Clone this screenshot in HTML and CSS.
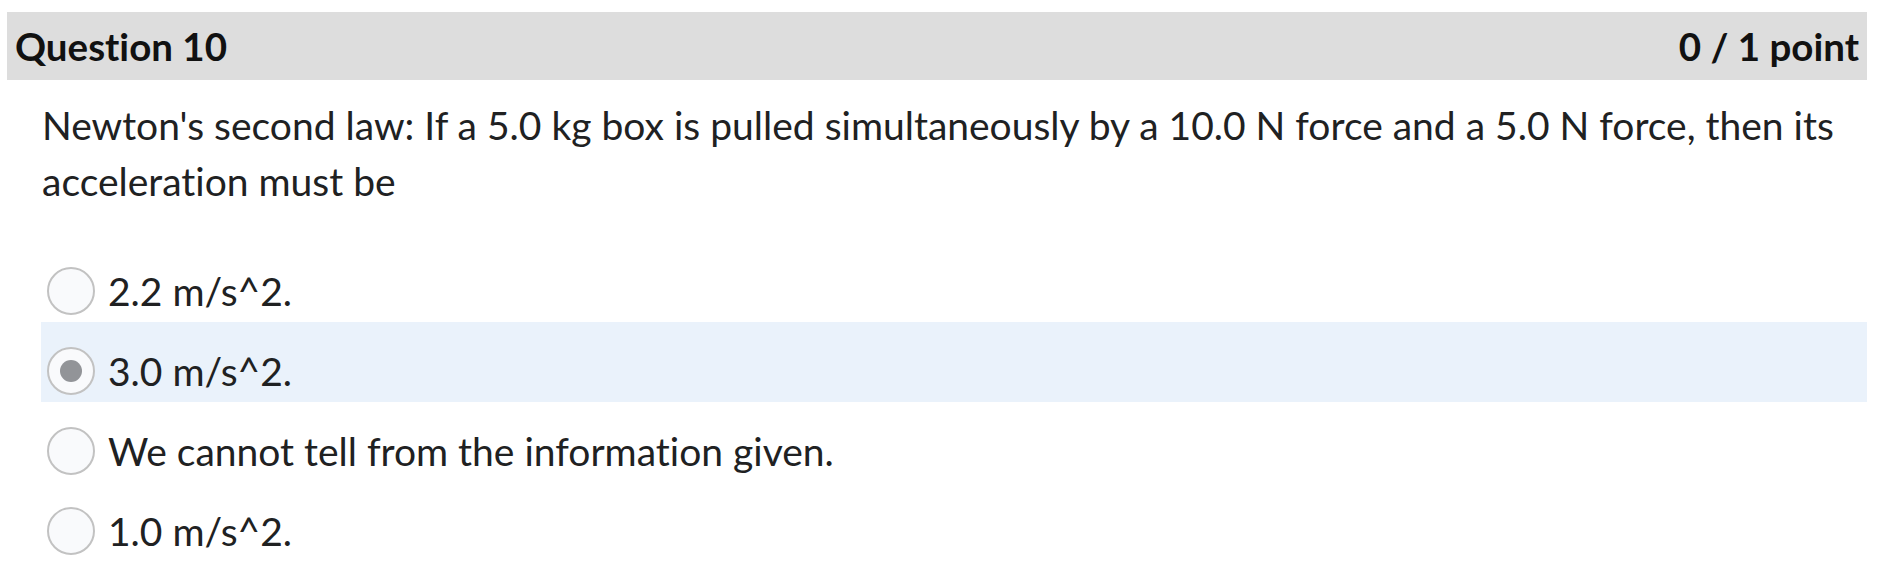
FILE: index.html
```html
<!DOCTYPE html>
<html lang="en">
<head>
<meta charset="utf-8">
<title>Question 10</title>
<link rel="stylesheet" href="styles.css">
</head>
<body>
<div class="quiz">
  <div class="q-header">
    <h2 class="q-title">Question 10</h2>
    <div class="q-score">0 / 1 point</div>
  </div>
  <div class="q-body">
    <p class="q-text">Newton's second law: If a 5.0 kg box is pulled simultaneously by a 10.0 N force and a 5.0 N force, then its acceleration must be</p>
    <div class="options">
      <div class="option"><span class="radio"></span><span class="opt-label">2.2 m/s^2.</span></div>
      <div class="option selected"><span class="radio checked"></span><span class="opt-label">3.0 m/s^2.</span></div>
      <div class="option"><span class="radio"></span><span class="opt-label">We cannot tell from the information given.</span></div>
      <div class="option"><span class="radio"></span><span class="opt-label">1.0 m/s^2.</span></div>
    </div>
  </div>
</div>
</body>
</html>
```
FILE: styles.css
```css
html, body {
  margin: 0;
  padding: 0;
  background: #ffffff;
}
body {
  font-family: Lato, "Liberation Sans", sans-serif;
  color: #202122;
  font-variant-ligatures: none;
  font-feature-settings: "liga" 0, "clig" 0;
}
.quiz {
  padding: 12px 20px 0 7px;
}
.q-header {
  display: flex;
  justify-content: space-between;
  align-items: center;
  height: 68px;
  background: #dddddd;
  padding: 0 8px;
}
.q-title, .q-score {
  margin: 0;
  font-size: 38.5px;
  font-weight: 700;
  color: #111111;
}
.q-body {
  padding: 0 0 0 34px;
}
.q-text {
  margin: 0;
  padding: 17px 0 33px 1px;
  font-size: 39px;
  line-height: 56px;
}
.options {
  display: flex;
  flex-direction: column;
}
.option {
  display: flex;
  align-items: center;
  height: 80px;
  box-sizing: border-box;
  padding: 18px 0 0 6px;
  gap: 13px;
}
.option.selected {
  background: #eaf2fb;
}
.radio {
  width: 48px;
  height: 48px;
  box-sizing: border-box;
  border-radius: 50%;
  border: 2px solid #c2c2c2;
  background: #f9fafc;
  display: flex;
  align-items: center;
  justify-content: center;
  flex: none;
}
.radio.checked::after {
  content: "";
  width: 22px;
  height: 22px;
  border-radius: 50%;
  background: #929498;
}
.opt-label {
  font-size: 39px;
}
```
